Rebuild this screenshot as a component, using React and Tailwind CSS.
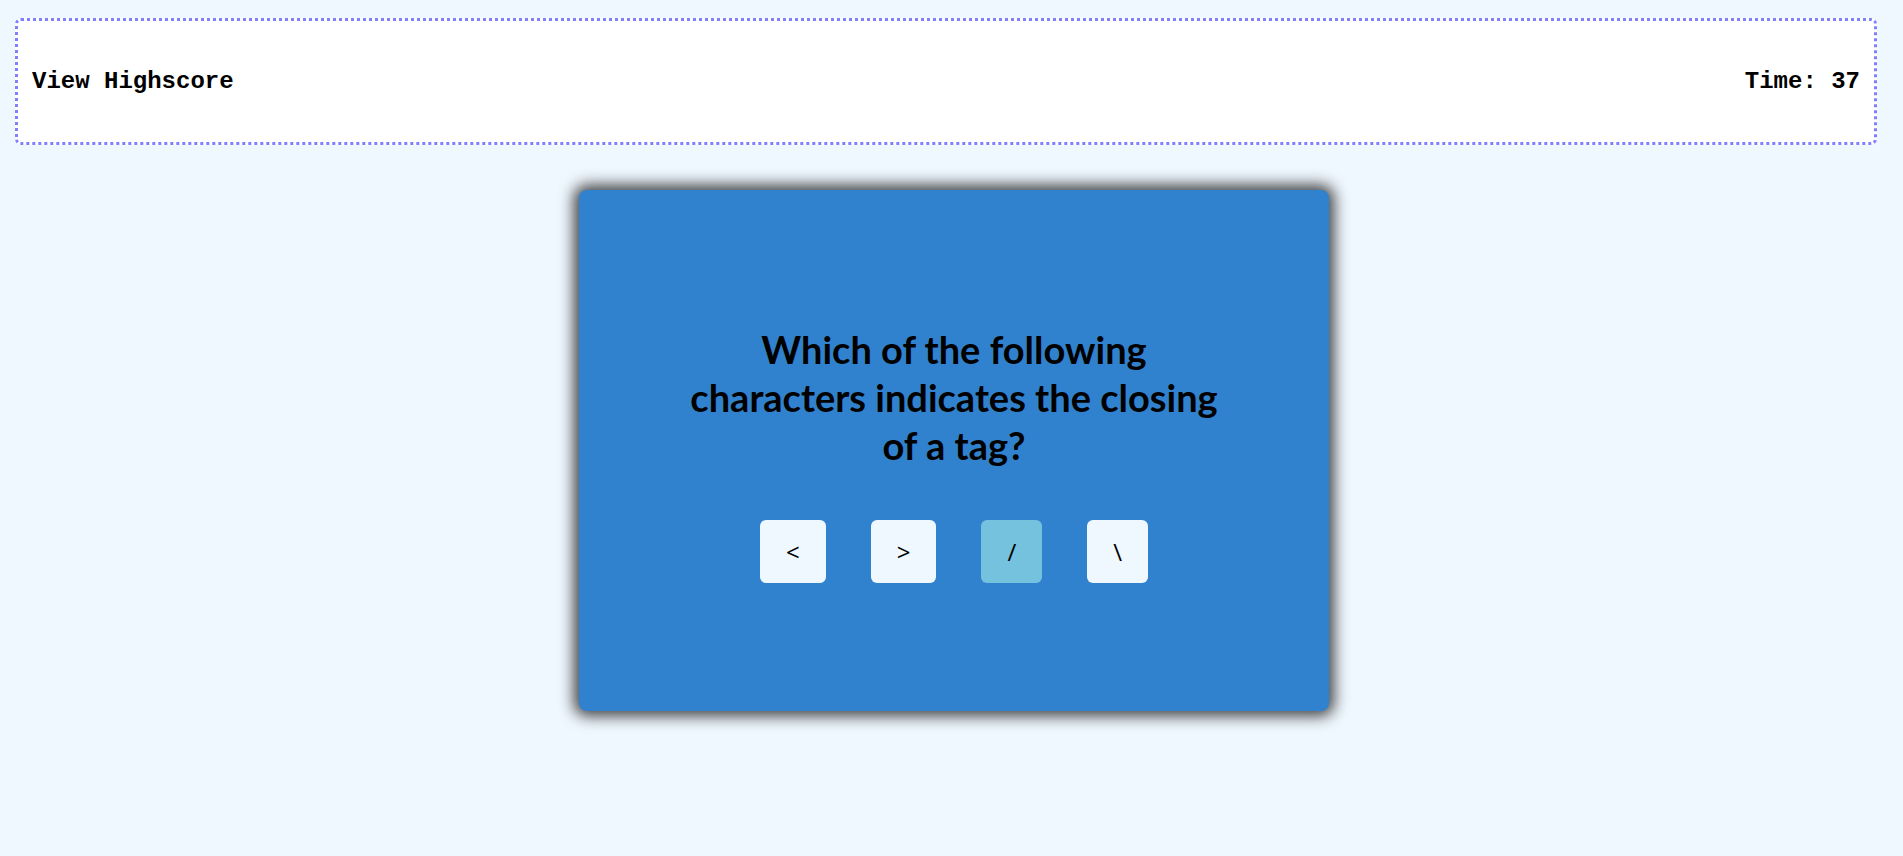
import React, { useState } from "react";

const choices = ["<", ">", "/", "\\"];

export default function App() {
  const [picked, setPicked] = useState(2);

  return (
    <div className="min-h-[856px] bg-[#f0f8ff] pt-[18px]">
      <header className="ml-[15px] mr-[26px] h-[127px] flex items-center justify-between px-[14px] bg-white border-[3px] border-dotted border-[#8080ff] rounded-md font-['Liberation_Mono',monospace] font-bold text-[24px] text-black">
        <span>View Highscore</span>
        <span>Time: 37</span>
      </header>

      <main className="flex justify-center pl-[5px] mt-[45px]">
        <section className="w-[750px] h-[521px] pt-[6px] bg-[#3182ce] rounded-lg shadow-[0_0_15px_5px_rgba(0,0,0,0.75)] flex flex-col items-center justify-center">
          <h2 className="w-[540px] text-center font-['Lato',sans-serif] font-bold text-[38px] leading-[48px] text-black">
            Which of the following characters indicates the closing of a tag?
          </h2>
          <div className="mt-[51px] flex gap-[45px]">
            {choices.map((c, i) => (
              <button
                key={c}
                onClick={() => setPicked(i)}
                className={
                  "px-[26px] py-[15px] rounded-md font-['Open_Sans',sans-serif] text-[24px] leading-[33px] text-black " +
                  (i === picked ? "bg-[#75c2de]" : "bg-[#f0f8ff]")
                }
              >
                {c}
              </button>
            ))}
          </div>
        </section>
      </main>
    </div>
  );
}
